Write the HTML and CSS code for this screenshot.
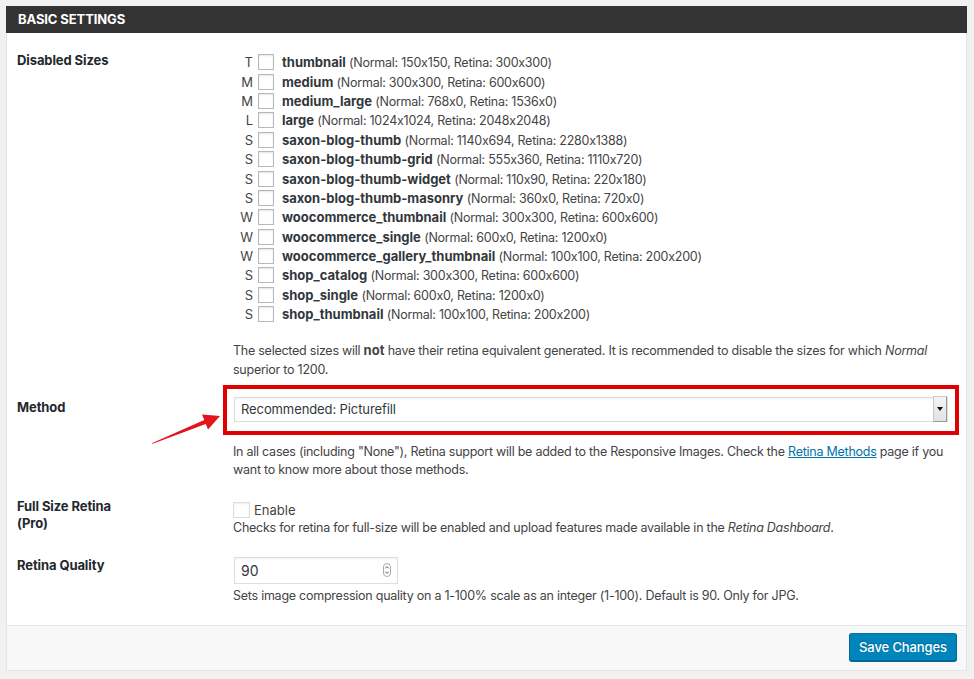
FILE: index.html
```html
<!DOCTYPE html>
<html>
<head>
<meta charset="utf-8">
<title>Basic Settings</title>
<link rel="stylesheet" href="styles.css">
</head>
<body>
<div class="panel">
  <h2 class="panel-title">BASIC SETTINGS</h2>
  <div class="panel-body">
    <div class="row row-sizes">
      <div class="label">Disabled Sizes</div>
      <div class="field">
        <ul class="sizes">
          <li><span class="code">T</span><span class="cb"></span><span class="name"><b>thumbnail</b> (Normal: 150x150, Retina: 300x300)</span></li>
          <li><span class="code">M</span><span class="cb"></span><span class="name"><b>medium</b> (Normal: 300x300, Retina: 600x600)</span></li>
          <li><span class="code">M</span><span class="cb"></span><span class="name"><b>medium_large</b> (Normal: 768x0, Retina: 1536x0)</span></li>
          <li><span class="code">L</span><span class="cb"></span><span class="name"><b>large</b> (Normal: 1024x1024, Retina: 2048x2048)</span></li>
          <li><span class="code">S</span><span class="cb"></span><span class="name"><b>saxon-blog-thumb</b> (Normal: 1140x694, Retina: 2280x1388)</span></li>
          <li><span class="code">S</span><span class="cb"></span><span class="name"><b>saxon-blog-thumb-grid</b> (Normal: 555x360, Retina: 1110x720)</span></li>
          <li><span class="code">S</span><span class="cb"></span><span class="name"><b>saxon-blog-thumb-widget</b> (Normal: 110x90, Retina: 220x180)</span></li>
          <li><span class="code">S</span><span class="cb"></span><span class="name"><b>saxon-blog-thumb-masonry</b> (Normal: 360x0, Retina: 720x0)</span></li>
          <li><span class="code">W</span><span class="cb"></span><span class="name"><b>woocommerce_thumbnail</b> (Normal: 300x300, Retina: 600x600)</span></li>
          <li><span class="code">W</span><span class="cb"></span><span class="name"><b>woocommerce_single</b> (Normal: 600x0, Retina: 1200x0)</span></li>
          <li><span class="code">W</span><span class="cb"></span><span class="name"><b>woocommerce_gallery_thumbnail</b> (Normal: 100x100, Retina: 200x200)</span></li>
          <li><span class="code">S</span><span class="cb"></span><span class="name"><b>shop_catalog</b> (Normal: 300x300, Retina: 600x600)</span></li>
          <li><span class="code">S</span><span class="cb"></span><span class="name"><b>shop_single</b> (Normal: 600x0, Retina: 1200x0)</span></li>
          <li><span class="code">S</span><span class="cb"></span><span class="name"><b>shop_thumbnail</b> (Normal: 100x100, Retina: 200x200)</span></li>
        </ul>
        <p class="desc desc-sizes">The selected sizes will <b>not</b> have their retina equivalent generated. It is recommended to disable the sizes for which <i>Normal</i> superior to 1200.</p>
      </div>
    </div>

    <div class="row row-method">
      <div class="label">Method</div>
      <div class="field">
        <div class="select-wrap">
          <div class="select">
            <span class="select-text">Recommended: Picturefill</span>
            <span class="select-btn"><span class="tri"></span></span>
          </div>
          <div class="highlight"></div>
          <svg class="arrow" width="80" height="40" viewBox="0 0 80 40"><polygon points="0,31 0.4,30 52.25,7 50,1.5 68,3 56,16.5 53.75,11" fill="#e3141c"/></svg>
        </div>
        <p class="desc desc-method">In all cases (including "None"), Retina support will be added to the Responsive Images. Check the <a href="#">Retina Methods</a> page if you want to know more about those methods.</p>
      </div>
    </div>

    <div class="row row-full">
      <div class="label label-two">Full Size Retina<br>(Pro)</div>
      <div class="field">
        <div class="enable"><span class="cb cb-light"></span><span>Enable</span></div>
        <p class="desc desc-full">Checks for retina for full-size will be enabled and upload features made available in the <i>Retina Dashboard</i>.</p>
      </div>
    </div>

    <div class="row row-quality">
      <div class="label">Retina Quality</div>
      <div class="field">
        <div class="number">
          <span class="number-val">90</span>
          <svg class="spin" width="8" height="14" viewBox="0 0 8 14"><rect x="0.5" y="0.5" width="7" height="13" rx="3.5" fill="#fff" stroke="#aaa"/><path d="M2.3 5.3 L4 3.6 L5.7 5.3 M2.3 8.7 L4 10.4 L5.7 8.7" fill="none" stroke="#555" stroke-width="1"/></svg>
        </div>
        <p class="desc desc-quality">Sets image compression quality on a 1-100% scale as an integer (1-100). Default is 90. Only for JPG.</p>
      </div>
    </div>
  </div>
  <div class="panel-footer">
    <button class="btn-primary">Save Changes</button>
  </div>
</div>
</body>
</html>
```

FILE: styles.css
```css
html, body {
  margin: 0;
  padding: 0;
  background: #f1f1f1;
}
body {
  padding: 6px 7px 0 6px;
  font-family: "Inter", "Liberation Sans", sans-serif;
  font-size: 12.5px;
  letter-spacing: -0.25px;
  font-feature-settings: "calt" 0;
  color: #444;
}
b {
  font-size: 13px;
  letter-spacing: 0;
}
.panel {
  background: #fff;
  border: 1px solid #e5e5e5;
  border-top: 0;
  box-shadow: 0 1px 1px rgba(0,0,0,.04);
}
.panel-title {
  margin: 0 -1px;
  height: 27px;
  line-height: 27px;
  background: #333;
  color: #fff;
  font-size: 13px;
  font-weight: 700;
  padding-left: 12px;
  letter-spacing: -0.1px;
}
.panel-body {
  padding: 18px 0 20px 10px;
}
.row {
  display: grid;
  grid-template-columns: 216px 1fr;
}
.label {
  font-weight: 700;
  font-size: 13px;
  letter-spacing: -0.1px;
  color: #23282d;
  line-height: 19px;
}
.row-method .label {
  padding-top: 1px;
}
.field {
  padding-right: 20px;
}
.sizes {
  list-style: none;
  margin: 0;
  padding: 1.5px 0 0 0;
}
.sizes li {
  display: flex;
  align-items: center;
  height: 19.4px;
  white-space: nowrap;
}
.code {
  width: 20px;
  text-align: right;
  margin-right: 5px;
  font-size: 13px;
  letter-spacing: 0;
}
.cb {
  display: inline-block;
  box-sizing: border-box;
  width: 16px;
  height: 16px;
  border: 1px solid #b4b9be;
  background: #fff;
  box-shadow: inset 0 1px 2px rgba(0,0,0,.1);
  margin-right: 8px;
  flex: none;
}
.cb-light {
  border-color: #ddd;
  box-shadow: inset 0 1px 2px rgba(0,0,0,.07);
  margin-right: 4px;
  width: 17px;
}
.name b {
  font-weight: 700;
  color: #32373c;
}
.desc {
  margin: 0;
  line-height: 19px;
}
.desc-sizes {
  margin-top: 17.4px;
}
.row-method {
  margin-top: 17.5px;
}
.select-wrap {
  position: relative;
  margin-left: 1px;
  width: 714px;
}
.select {
  display: flex;
  align-items: stretch;
  height: 25px;
  box-sizing: border-box;
  border: 1px solid #ddd;
  background: #fff;
  box-shadow: inset 0 1px 2px rgba(0,0,0,.07);
}
.select-text {
  flex: 1;
  font-size: 13px;
  letter-spacing: -0.1px;
  line-height: 23px;
  padding-left: 6px;
  color: #32373c;
}
.select-btn {
  width: 14px;
  margin: -2px 0 -1px 0;
  box-sizing: border-box;
  background: linear-gradient(#f4f4f4, #e2e2e2);
  border: 1px solid #c8c8c8;
  border-right-color: #999;
  border-bottom-color: #999;
  display: flex;
  align-items: center;
  justify-content: center;
}
.tri {
  width: 0;
  height: 0;
  border-left: 3px solid transparent;
  border-right: 3px solid transparent;
  border-top: 4px solid #111;
}
.highlight {
  position: absolute;
  left: -11px;
  right: -11px;
  top: -12px;
  bottom: -13px;
  border: 4px solid #e00000;
  pointer-events: none;
}
.arrow {
  position: absolute;
  left: -82px;
  top: 16px;
}
.desc-method {
  margin-top: 20.75px;
  line-height: 18.5px;
}
.desc a {
  color: #0073aa;
  text-decoration: underline;
}
.row-full {
  margin-top: 18.25px;
}
.label-two {
  line-height: 17.5px;
}
.row-full .field {
  padding-top: 3.5px;
}
.enable {
  display: flex;
  align-items: center;
  height: 18px;
  color: #444;
  font-size: 13px;
  letter-spacing: 0;
}
.desc-full {
  line-height: 18px;
}
.row-quality {
  margin-top: 18.5px;
}
.row-quality .field {
  padding-top: 1px;
}
.number {
  display: flex;
  align-items: center;
  width: 164px;
  height: 27px;
  box-sizing: border-box;
  margin-left: 1px;
  border: 1px solid #ddd;
  background: #fff;
  box-shadow: inset 0 1px 2px rgba(0,0,0,.07);
  padding: 0 6px 0 6px;
}
.number-val {
  flex: 1;
  font-size: 14px;
  letter-spacing: 0;
  color: #32373c;
}
.spin {
  display: block;
}
.desc-quality {
  margin-top: 3.5px;
  line-height: 18px;
}
.panel-footer {
  border-top: 1px solid #e5e5e5;
  background: #f8f8f8;
  display: flex;
  justify-content: flex-end;
  align-items: flex-start;
  padding: 7px 9px 0 0;
  box-sizing: border-box;
  height: 45px;
}
.btn-primary {
  height: 28px;
  width: 108px;
  padding: 0;
  border: 1px solid #0073aa;
  border-color: #0073aa #006799 #006799;
  border-radius: 3px;
  background: #0085ba;
  box-shadow: 0 1px 0 #006799;
  color: #fff;
  font-family: "Inter", "Liberation Sans", sans-serif;
  font-size: 13px;
  font-weight: 500;
  letter-spacing: -0.1px;
  text-shadow: 0 -1px 1px #006799;
}
```
